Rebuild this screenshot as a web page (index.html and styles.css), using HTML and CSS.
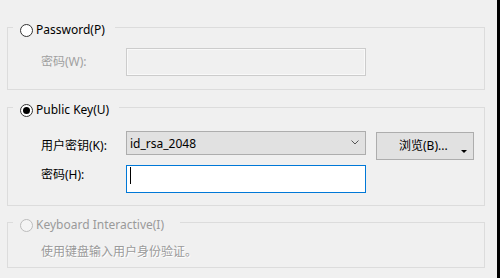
FILE: index.html
```html
<!DOCTYPE html>
<html lang="zh-CN">
<head>
    <meta charset="UTF-8">
    <meta name="viewport" content="width=device-width, initial-scale=1.0">
    <title>Authentication</title>
    <link rel="stylesheet" href="styles.css">
</head>
<body>
    <div class="window">
        <div class="panel">
            <!-- Password -->
            <fieldset class="group group-password">
                <legend class="group-title"><span class="radio"></span>Password(P)</legend>
                <div class="rows rows-password">
                    <label class="field-label disabled">密码(W):</label>
                    <div class="text-box is-disabled"></div>
                </div>
            </fieldset>

            <!-- Public key -->
            <fieldset class="group group-key">
                <legend class="group-title"><span class="radio checked"></span>Public Key(U)</legend>
                <div class="rows rows-key">
                    <label class="field-label">用户密钥(K):</label>
                    <div class="combo">
                        <span class="combo-value">id_rsa_2048</span>
                        <svg class="chevron" width="8" height="5" viewBox="0 0 8 5">
                            <path d="M0.5 0.5 L4 4 L7.5 0.5" fill="none" stroke="#555" stroke-width="1"/>
                        </svg>
                    </div>
                    <div class="spacer"></div>
                    <button class="browse">浏览(B)...<span class="split-arrow"></span></button>

                    <label class="field-label top">密码(H):</label>
                    <div class="text-box is-focused"><span class="caret"></span></div>
                </div>
            </fieldset>

            <!-- Keyboard interactive -->
            <fieldset class="group group-kbd">
                <legend class="group-title disabled"><span class="radio off"></span>Keyboard Interactive(I)</legend>
                <p class="hint">使用键盘输入用户身份验证。</p>
            </fieldset>
        </div>
        <div class="edge"></div>
    </div>
</body>
</html>
```

FILE: styles.css
```css
body {
    margin: 0;
    font-family: "Noto Sans", "Noto Sans CJK SC", sans-serif;
    font-size: 12px;
    color: #000;
    background: #000;
}
.window {
    display: flex;
    width: 500px;
    height: 278px;
}
.panel {
    width: 497px;
    height: 278px;
    background-color: #f0f0f0;
    padding: 17px 12px 0 7px;
    box-sizing: border-box;
}
.edge {
    width: 3px;
    background: #000;
}
.group {
    margin: 0;
    border: 1px solid #dcdcdc;
    padding: 0 0 0 5px;
    min-width: 0;
}
.group-key {
    margin-top: 7px;
}
.group-kbd {
    margin-top: 6px;
}
.group-title {
    display: flex;
    align-items: center;
    gap: 3px;
    line-height: 14px;
    padding: 6px 10px 0 7px;
}
.group-title.disabled {
    color: #9a9a9a;
    padding-right: 16px;
}
.radio {
    display: inline-block;
    width: 13px;
    height: 13px;
    box-sizing: border-box;
    border: 1px solid #333;
    border-radius: 50%;
    background: #fff;
    position: relative;
}
.radio.checked::after {
    content: "";
    position: absolute;
    left: 2px;
    top: 2px;
    width: 7px;
    height: 7px;
    border-radius: 50%;
    background: #000;
}
.radio.off {
    border-color: #bcbcbc;
    background: #f4f4f4;
}
.rows {
    display: grid;
    padding-left: 28px;
    align-items: center;
}
.rows-password {
    grid-template-columns: 85px 240px;
    padding-top: 11px;
    padding-bottom: 13px;
}
.rows-key {
    grid-template-columns: 85px 240px 10px 98px;
    grid-template-rows: 29px 28px;
    row-gap: 5px;
    padding-top: 14px;
    padding-bottom: 12px;
}
.field-label {
    line-height: 16px;
    white-space: nowrap;
}
.field-label.top {
    align-self: start;
    padding-top: 2px;
}
.field-label.disabled {
    color: #a0a0a0;
}
.text-box {
    height: 28px;
    box-sizing: border-box;
    border: 1px solid #ccc;
    display: flex;
    align-items: center;
    padding-left: 3px;
}
.text-box.is-disabled {
    background: #f0f0f0;
    box-shadow: inset 0 0 0 1px #f9f9f9;
}
.text-box.is-focused {
    background: #fff;
    border-color: #0078d7;
}
.caret {
    width: 1px;
    height: 17px;
    margin-top: -7px;
    background: #000;
}
.combo {
    align-self: start;
    height: 24px;
    box-sizing: border-box;
    border: 1px solid #adadad;
    background: #e1e1e1;
    display: flex;
    align-items: center;
    justify-content: space-between;
    padding: 0 6px 0 3px;
}
.chevron {
    margin-top: -1px;
}
.browse {
    align-self: end;
    height: 28px;
    margin: 0;
    border: 1px solid #adadad;
    background: #e1e1e1;
    font: inherit;
    color: #000;
    display: flex;
    align-items: center;
    gap: 13px;
    padding: 0 0 2px 22px;
    white-space: nowrap;
}
.split-arrow {
    align-self: flex-end;
    margin-bottom: 4px;
    width: 0;
    height: 0;
    border-left: 3px solid transparent;
    border-right: 3px solid transparent;
    border-top: 3px solid #000;
}
.hint {
    margin: 0;
    padding: 12px 0 7px 28px;
    line-height: 16px;
    color: #9a9a9a;
    text-shadow: 1px 1px 0 #fff;
}
```
